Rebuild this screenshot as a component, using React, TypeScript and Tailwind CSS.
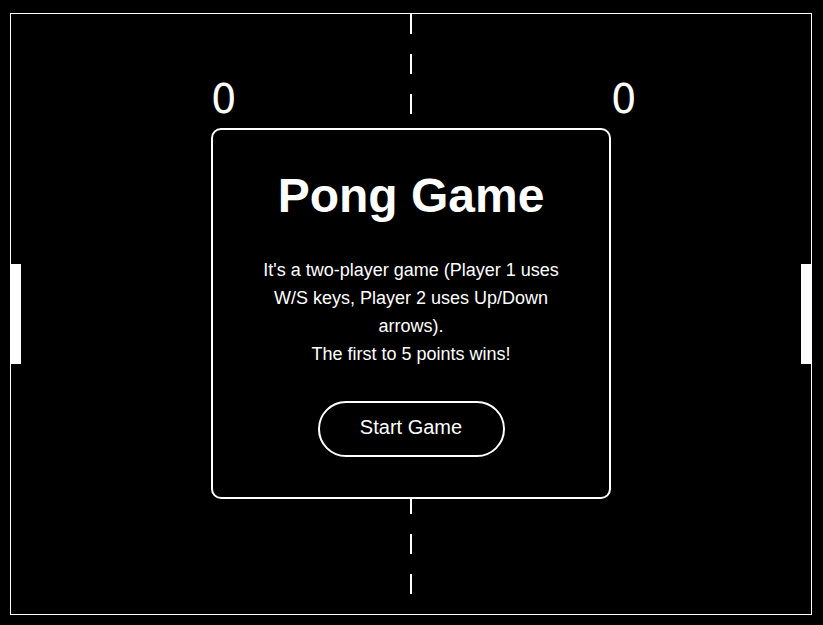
import React from "react";

export default function App() {
  return (
    <div className="min-h-screen w-full bg-black pl-[10px] pt-[13px]" style={{ fontFamily: '"Liberation Sans", Arial, sans-serif' }}>
      <div className="relative w-[802px] h-[602px] border border-white bg-black">
        <svg width="800" height="600" viewBox="0 0 800 600" className="block">
          <line x1="400" y1="0" x2="400" y2="600" stroke="#fff" strokeWidth="2" strokeDasharray="20 20" />
          <rect x="0" y="250" width="10" height="100" fill="#fff" />
          <rect x="790" y="250" width="10" height="100" fill="#fff" />
          <text x="200" y="99" fill="#fff" fontSize="40" fontFamily='"DejaVu Sans", sans-serif'>0</text>
          <text x="600" y="99" fill="#fff" fontSize="40" fontFamily='"DejaVu Sans", sans-serif'>0</text>
        </svg>
        <div className="absolute left-[200px] top-[114px] w-[400px] rounded-[10px] border-2 border-white bg-black px-[40px] pt-[38px] pb-[40px] text-center text-white">
          <h1 className="text-[48px] leading-[56px] font-bold">Pong Game</h1>
          <p className="mt-[32px] text-[18px] leading-[28px]">
            It's a two-player game (Player 1 uses W/S keys, Player 2 uses Up/Down arrows).
            <br />
            The first to 5 points wins!
          </p>
          <div className="mt-[33px] flex justify-center">
            <button className="h-[56px] w-[187px] rounded-full border-2 border-white bg-black pt-[13px] pb-[16px] text-[20px] leading-[23px] text-white">
              Start Game
            </button>
          </div>
        </div>
      </div>
    </div>
  );
}
